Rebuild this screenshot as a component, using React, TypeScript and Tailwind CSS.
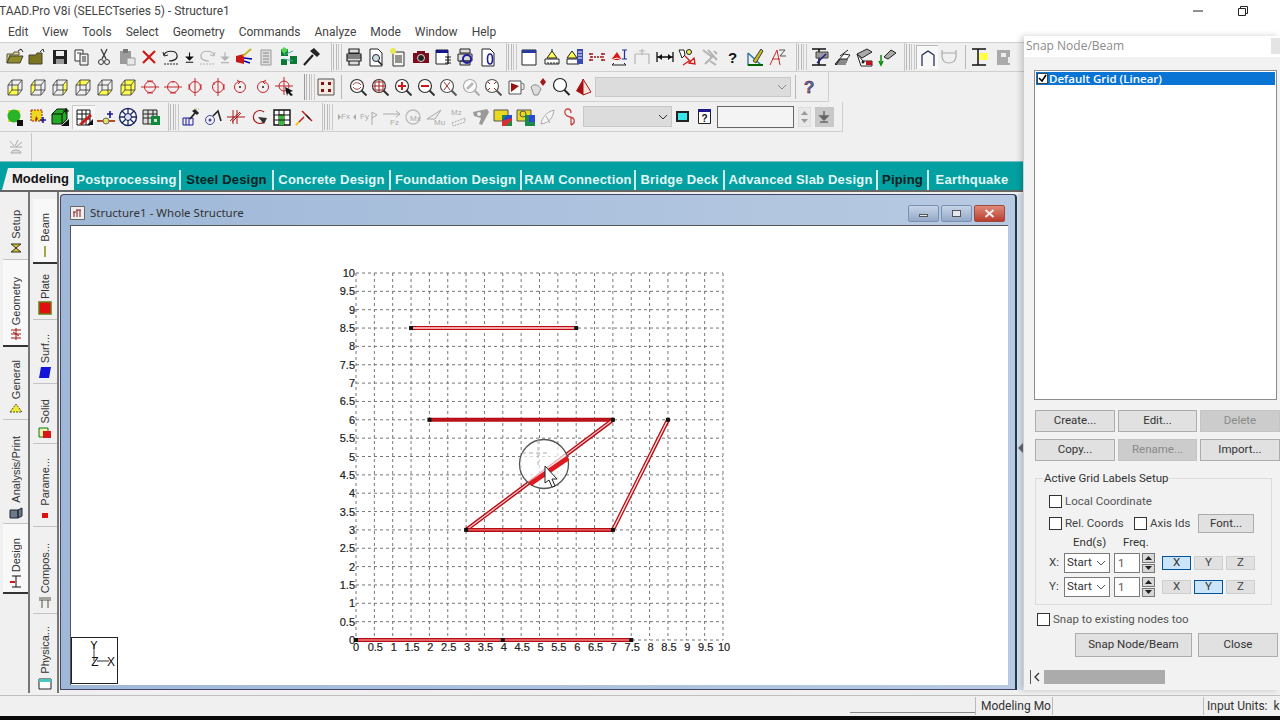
import React from "react";

const S = ({ children, v = 20 }: { children?: React.ReactNode; v?: number }) => (
  <svg width={v} height={v} viewBox="0 0 20 20" fill="none" strokeWidth={1}>{children}</svg>
);
const R = "#c8262c";
const cube = (f: string, g = "") => (
  <S>
    {f && <path d={f} fill="#ffff4d" />}
    {g && <path d={g} fill="#e8e85a" />}
    <path d="M3 8h10v10H3zM7 3h10v10H7zM3 8l4-5M13 8l4-5M13 18l4-5M3 18l4-5" stroke="#444" strokeWidth="0.9" />
  </S>
);
const rot = (c: React.ReactNode) => (
  <S>
    <circle cx="10" cy="10" r="5.5" stroke={R} />
    {c}
  </S>
);
const mag = (c?: React.ReactNode, col = "#333") => (
  <S>
    <circle cx="9" cy="9" r="6.5" stroke={col} strokeWidth="1.2" fill="#fff" />
    <path d="M13.5 13.5l5 5" stroke={col} strokeWidth="2" />
    {c}
  </S>
);
const G = "#b4b4b4";

const row1a: React.ReactNode[] = [
  <S><path d="M2 7h6l1-2h5v3H5L2 16z" fill="#e6d780" stroke="#554" /><path d="M2 16l3-7h13l-3 7z" fill="#8f8a2a" stroke="#443" /><path d="M13 4l3-2 2 3" stroke="#222" /></S>,
  <S><path d="M2 8h7l1-2h5v11H2z" fill="#7c7420" stroke="#443" /><path d="M13 5l3-3 1 3" stroke="#333" /></S>,
  <S><path d="M3 3h14v14H3z" fill="#222" /><path d="M6 4h8v5H6z" fill="#eee" /><path d="M6 12h8v5H6z" fill="#9a9a9a" /></S>,
  <S><path d="M3 3h8v11H3z" fill="#fff" stroke="#333" /><path d="M8 7h8v11H8z" fill="#eee" stroke="#333" /><path d="M10 10h4M10 12h4M10 14h4M5 6h4" stroke="#333" /></S>,
  <S><path d="M7 2l5 10M13 2L8 12" stroke="#333" strokeWidth="1.2" /><circle cx="7" cy="15" r="2.5" stroke="#333" /><circle cx="13" cy="15" r="2.5" stroke="#333" /></S>,
  <S><path d="M3 4h11v13H3z" fill="#9c9c9c" /><path d="M6 2h5v4H6z" fill="#777" /><path d="M10 11h8v7h-8z" fill="#e8e8e8" stroke="#999" /></S>,
  <S><path d="M4 4l12 12M16 4L4 16" stroke="#d01818" strokeWidth="2.2" /></S>,
  <S><path d="M3 8c2-5 12-5 13 0s-5 6-8 6" stroke="#222" strokeWidth="1.2" /><path d="M2 5l1 4 4-1" stroke="#222" /><path d="M3 17h14" stroke="#222" strokeDasharray="2 1" /></S>,
  <S v={16}><path d="M10 4v7M6 10h8l-4 4zM5 17h10" stroke="#111" strokeWidth="1.5" fill="#111" /></S>,
  <S><path d="M17 8c-2-5-12-5-13 0s5 6 8 6" stroke={G} strokeWidth="1.2" /><path d="M18 5l-1 4-4-1" stroke={G} /><path d="M3 17h14" stroke={G} strokeDasharray="2 1" /></S>,
  <S v={16}><path d="M10 4v7M6 10h8l-4 4zM5 17h10" stroke={G} strokeWidth="1.5" fill={G} /></S>,
  <S><path d="M2 9l8-2v10l-8-2z" fill="#c81818" /><path d="M10 11l8 1M10 14l6 2" stroke="#00a" strokeWidth="1.4" /><path d="M9 9l8-7" stroke="#c8b820" strokeWidth="2" /></S>,
  <S><path d="M5 3h10v15H5z" fill="#ddd" stroke="#999" /><path d="M7 6h6M7 9h6M7 12h6M7 15h6" stroke="#888" /></S>,
  <S><path d="M2 2h7v7H2zM11 9h7v8h-7zM2 12h6v6H2z" fill="#0d7a34" /><path d="M5 0l4 3-4 4-3-4z" fill="#52d652" /><path d="M5 8l9-4M5 12l9 2" stroke="#4aa" /></S>,
  <S><path d="M3 18L12 8" stroke="#222" strokeWidth="2.2" /><path d="M9 4l4-3 6 6-3 3z" fill="#222" /></S>,
];
const row1aW = [22.3, 22.3, 22.3, 22.3, 22.3, 22.3, 22.3, 22, 15, 20, 16, 22, 22.5, 22.5, 22.5];
const row1b: React.ReactNode[] = [
  <S><path d="M5 2h10v4H5zM3 7h14v7H3zM5 14h10v4H5z" fill="#ddd" stroke="#222" strokeWidth="1.2" /><path d="M3 9h14M3 11h14" stroke="#222" /></S>,
  <S><path d="M4 2h8l4 4v13H4z" fill="#fff" stroke="#222" /><circle cx="10" cy="11" r="3.5" stroke="#224" fill="#cdd" /><path d="M12 14l4 4" stroke="#222" strokeWidth="1.6" /></S>,
  <S><path d="M5 5h11v14H5z" fill="#f4f4f0" stroke="#333" /><path d="M7 9h7M7 11h7M7 13h7M7 15h7" stroke="#333" /><circle cx="5" cy="4" r="3" fill="#e8e850" /></S>,
  <S><path d="M2 6h16v10H2z" fill="#7a0c1c" /><path d="M6 4h8v3H6z" fill="#7a0c1c" /><circle cx="10" cy="11" r="3.5" fill="#222" stroke="#ddd" /></S>,
  <S><path d="M3 3h12v14H3z" fill="#fff" stroke="#222" /><path d="M3 3h12v3H3z" fill="#14148c" /><path d="M12 10h6M12 13h6M12 16h6M15 9v8" stroke="#222" /></S>,
  <S><path d="M5 2h10v4H5zM3 7h14v7H3zM5 14h10v4H5z" fill="#ddd" stroke="#222" /><circle cx="12" cy="12" r="4" stroke="#1f1fa0" strokeWidth="2" /></S>,
  <S><path d="M4 2h8l4 4v13H4z" fill="#fff" stroke="#222" /><ellipse cx="12" cy="12" rx="2.5" ry="5" stroke="#1f1fa0" strokeWidth="1.6" /></S>,
];
const row1c: React.ReactNode[] = [
  <S><path d="M3 3h14v15H3z" fill="#fff" stroke="#222" /><path d="M3 3h14v3H3z" fill="#2a3a9a" /></S>,
  <S><path d="M10 2v3" stroke="#222" /><path d="M10 4l5 7H5z" fill="#ffff4d" stroke="#222" /><path d="M3 12h14v5H3z" fill="#fff" stroke="#222" /><path d="M6 15v2M9 15v2M12 15v2M15 15v2" stroke="#222" /></S>,
  <S><path d="M8 4l5 7H3z" fill="#ffff4d" stroke="#222" /><path d="M3 12h12v5H3z" fill="#fff" stroke="#222" /><path d="M13 2h6v15h-6z" fill="#3a4ab0" /><path d="M14 5h4M14 8h4M14 11h4" stroke="#fff" /></S>,
  <S><path d="M4 10h12M4 6v8M16 6v8M2 7h4M14 7h4M2 13h4M14 13h4" stroke="#a01818" strokeDasharray="2 1" strokeWidth="1.4" /></S>,
  <S><path d="M2 13l6-8 5 8z" fill="#d81818" /><path d="M2 13l6-2 5 2M3 15h9" stroke="#fff" /><path d="M13 3h5M15.5 3v9M13 12h5" stroke="#1f2fa0" strokeWidth="1.2" /><path d="M3 18h14M3 18l2-2M17 18l-2-2" stroke="#222" /></S>,
  <S><path d="M3 7h14M3 7v10M17 7v10M10 2v6M7 4h6" stroke={G} strokeWidth="1.2" /></S>,
  <S><path d="M2 5v10M18 5v10M2 10h16" stroke="#111" strokeWidth="1.3" /><path d="M3 10l4-3v6zM17 10l-4-3v6z" fill="#111" /></S>,
  <S><path d="M2 3h5l1 5-3 3z" fill="#fff" stroke="#222" /><circle cx="12" cy="5" r="2.5" stroke="#222" fill="#ee5" /><path d="M8 9l6 6M12 16l5-5 1 6zM6 18l6-4" stroke="#d01818" strokeWidth="1.3" /></S>,
  <S><path d="M3 3l9 7-7 7M8 3l9 10M14 4l3 3M10 14l6 4" stroke={G} strokeWidth="2" /></S>,
  <S><text x="6" y="16" fontSize="15" fontWeight="700" fill="#111" fontFamily="Liberation Sans">?</text></S>,
  <S><path d="M3 6v12h15" stroke="#1a5a8a" strokeWidth="1.2" /><path d="M3 6l13 12" stroke="#2a7a9a" strokeWidth="1.6" /><path d="M8 14l8-12 2 2-7 12z" fill="#c8b820" stroke="#444" /><path d="M3 18h15" stroke="#060" strokeWidth="2" /></S>,
  <S><path d="M3 18L10 3l3 15M5 12h8" stroke="#c82c2c" /><path d="M12 3h6l-5 6h6" stroke="#555" /></S>,
];
const row1d: React.ReactNode[] = [
  <S><path d="M3 2h14M3 18h14M10 2v16" stroke="#111" strokeWidth="1.6" /><path d="M7 5h12v6H7z" fill="#999" stroke="#444" /><path d="M8 16l9-9" stroke="#1a1a8a" strokeWidth="1.4" /></S>,
  <S><path d="M3 17l9-10 6 1-3 4H8l-4 6z" fill="#fff" stroke="#222" /><path d="M6 13h10M5 15h10M4 17h10M8 9l8-6" stroke="#222" /></S>,
  <S><path d="M3 7l10-5 5 3-10 6z" fill="#aaa" stroke="#222" /><path d="M3 7l4 12h11v-5H9z" fill="#fff" stroke="#222" /><path d="M12 14h6v4h-6z" fill="#b81818" /><circle cx="9" cy="15" r="1.5" fill="#222" /></S>,
  <S><path d="M7 10l7-7 5 3-8 6z" fill="#aaa" stroke="#222" /><path d="M4 8v9" stroke="#0a8a0a" strokeWidth="1.5" /><path d="M2 14l2 4 2-4" stroke="#0a8a0a" strokeWidth="1.5" /></S>,
];
const row1e: React.ReactNode[] = [
  <S><path d="M4 18V7l6-4 6 4v11" stroke="#1a2050" strokeWidth="1.2" /></S>,
  <S><path d="M3 3v7q1 6 7 6t7-6V3M3 6h14" stroke="#aaa" strokeWidth="1.2" /></S>,
];
const row2a: React.ReactNode[] = [
  cube("M3 13l10-5v10H3z"),
  cube("M3 8l4-5v10l-4 5z"),
  cube("M13 8l4-5v10l-4 5z"),
  cube("M3 8h10l4-5H7z"),
  cube("M3 18h10l4-5H7z"),
  cube("M3 8h10v10H3zM13 8l4-5v10l-4 5zM3 8l4-5h10l-4 5z"),
  rot(<path d="M1 10h18M7 4h6M7 16h6" stroke={R} />),
  rot(<path d="M1 10h18M10 5v1M7 16h6" stroke={R} />),
  rot(<path d="M10 1v18M4 7v6M16 7v6" stroke={R} />),
  rot(<path d="M10 1v18M6 5l0 3M16 7v6" stroke={R} />),
  rot(<><path d="M7 3l3 2-2 2" stroke={R} /><circle cx="10" cy="10" r="1" fill="#222" /></>),
  rot(<><path d="M13 3l-3 2 2 2" stroke={R} /><circle cx="10" cy="10" r="1" fill="#222" /></>),
  <S><circle cx="9" cy="9" r="5" stroke={R} /><path d="M0 9h18M9 0v18" stroke={R} /><path d="M10 10l8 4-3 1 3 3-2 1-3-3-1 3z" fill="#111" /></S>,
];
const row2b: React.ReactNode[] = [
  mag(<path d="M5 8c1-3 6-3 8 0M5 10c2 3 6 3 8 0" stroke="#a04040" />),
  mag(<path d="M9 2v14M2 9h14M5 5h8v8H5z" stroke="#a02020" />),
  mag(<path d="M9 5v8M5 9h8" stroke="#d01818" strokeWidth="2" />),
  mag(<path d="M5 9h8" stroke="#d01818" strokeWidth="2" />),
  mag(<path d="M6 5l6 8M12 5l-6 8" stroke="#a03030" />, "#555"),
  mag(<path d="M6 12l6-6" stroke="#bbb" strokeWidth="3" />, "#aaa"),
  mag(<path d="M5 5l2 2M13 5l-2 2M5 13l2-2M13 13l-2-2" stroke="#a02020" />, "#555"),
  <S><path d="M3 4h12v13H3z" fill="#fff" stroke="#555" /><path d="M5 6l8 3-8 6z" fill="#9a1010" /><path d="M15 6l3 1v5l-3 1" stroke="#777" /></S>,
  <S><path d="M2 10c3-4 8-2 10 2l-3 6H5z" fill="#ddd" stroke="#888" /><path d="M14 1l3 4-3 4-3-4z" fill="#a81818" /></S>,
  <S><circle cx="9" cy="8" r="6.5" stroke="#222" strokeWidth="1.2" fill="#fff" /><path d="M13.5 13l5 5" stroke="#222" strokeWidth="2" /></S>,
  <S><path d="M9 2l-7 12 7 4z" fill="#a81010" /><path d="M9 2l8 13-8 3z" fill="#f2e4e0" stroke="#a81010" /></S>,
];
const row3a: React.ReactNode[] = [
  <S><path d="M3 3h12v12H3z" fill="#e8d820" /><circle cx="9" cy="9" r="6.5" fill="#28b428" /><path d="M12 13h6v6h-6z" fill="#111" /></S>,
  <S><path d="M3 3h11v11H3z" fill="#ecd81c" stroke="#a01818" strokeDasharray="2 1" /><path d="M8 9l2 3-3 2z" fill="#a01818" /><path d="M15 10v6M12 13h6" stroke="#1a1a9a" strokeWidth="1.6" /></S>,
  <S><path d="M2 7l5-5h10v10l-5 5H2z" fill="#22a822" stroke="#111" /><path d="M2 7h10v10M12 7l5-5" stroke="#111" /><path d="M11 19l8-7v7z" fill="#111" /><path d="M16 1v6M13 4h6" stroke="#111" /></S>,
  <S><path d="M3 3h13v15H3z" fill="#fff" stroke="#111" /><path d="M3 7h13M3 12h13M8 3v15M12 3v15" stroke="#111" /><path d="M5 17l11-10 2 2L8 18z" fill="#c81818" /><path d="M13 18l6-6v6z" fill="#111" /></S>,
  <S><path d="M1 14h18" stroke="#b84a2c" strokeWidth="2" /><circle cx="10" cy="14" r="3" fill="#e8e060" stroke="#666" /><path d="M14 4v7M11 7h6" stroke="#1a1a8a" strokeWidth="1.6" /></S>,
  <S><circle cx="10" cy="10" r="8.5" stroke="#1a2a6a" strokeWidth="1.4" fill="#fff" /><circle cx="10" cy="10" r="3.5" stroke="#1a2a6a" fill="#dde" /><path d="M10 2v5M10 13v5M2 10h5M13 10h5M4 4l4 4M12 12l4 4M16 4l-4 4M8 12l-4 4" stroke="#1a2a6a" strokeWidth="1.3" /></S>,
  <S><path d="M2 3h14v14H2z" fill="#ddd" stroke="#222" /><path d="M2 7h14M2 11h14M7 3v14M12 3v14" stroke="#222" /><path d="M10 9h9v9h-9z" fill="#0e8a3a" /><path d="M13 12h3v3h-3z" fill="#ddd" /></S>,
];
const row3b: React.ReactNode[] = [
  <S><path d="M2 11h10v7H2zM5 11v7M8 11v7" stroke="#1a1a9a" /><path d="M9 12l5-6" stroke="#222" strokeWidth="1.8" /><path d="M11 4l3-2 4 4-2 2z" fill="#222" /><path d="M13 2l5 0" stroke="#c0b040" strokeDasharray="1 1" /></S>,
  <S><circle cx="6" cy="13" r="4.5" stroke="#44449a" /><circle cx="6" cy="13" r="1.5" fill="#44449a" /><path d="M9 9l5-5 3 10" stroke="#222" strokeWidth="1.6" /></S>,
  <S><path d="M1 10h18M7 3v14M11 3v14" stroke="#a81818" /><path d="M4 14L14 5M6 15l9-9" stroke="#a81818" /></S>,
  <S><path d="M15 5A6.5 6.5 0 1 0 15 15" stroke="#a81818" strokeWidth="1.2" /><path d="M9 10l9 1-3 6z" fill="#333" /></S>,
  <S><path d="M2 3h16v15H2z" fill="#fff" stroke="#111" strokeWidth="1.4" /><path d="M2 8h16M2 13h16M7 3v15M12 3v15" stroke="#111" /><path d="M7 8h5v10H7z" fill="#38b838" /><path d="M7 8h5M7 13h5" stroke="#111" /></S>,
  <S><path d="M2 18l8-8" stroke="#c81818" strokeWidth="1.5" /><path d="M8 4l10 10" stroke="#c81818" strokeWidth="1.4" /><path d="M2 18l3-3" stroke="#e8d820" strokeWidth="2" /><path d="M12 8l4 4" stroke="#222" strokeWidth="1.5" /></S>,
];
const gt = (t: string, x = 3) => <text x={x} y="12" fontSize="8" fill="#aaa" fontFamily="Liberation Sans">{t}</text>;
const row3c: React.ReactNode[] = [
  <S>{gt("Fx", 4)}<path d="M1 7l3 3-3 3zM19 7l-3 3 3 3z" fill="#aaa" /></S>,
  <S>{gt("Fy", 1)}<path d="M13 18V5l5 3-5 3" stroke="#aaa" /></S>,
  <S><path d="M1 7h16M14 4l4 3-4 3" stroke="#aaa" /><text x="8" y="18" fontSize="8" fill="#aaa" fontFamily="Liberation Sans">Fz</text></S>,
  <S><circle cx="9" cy="10" r="7" stroke="#bbb" strokeWidth="1.3" /><text x="6" y="14" fontSize="8" fill="#aaa" fontFamily="Liberation Sans">Mx</text></S>,
  <S><path d="M1 12L15 3 9 12z" fill="#eee" stroke="#aaa" /><text x="8" y="18" fontSize="8" fill="#aaa" fontFamily="Liberation Sans">Mu</text></S>,
  <S><text x="2" y="8" fontSize="8" fill="#aaa" fontFamily="Liberation Sans">Mz</text><path d="M3 16l13-5v4l-12 4z" stroke="#aaa" strokeDasharray="2 1" /></S>,
  <S><path d="M2 5l14-3 2 3-7 13-3-1 2-6-7-2z" fill="#9a9a9a" /><circle cx="8" cy="7" r="2" fill="#eee" /></S>,
  <S><path d="M1 3h14v11H1z" fill="#e8d820" stroke="#555" /><path d="M9 8h10v11H9z" fill="#1a8a4a" /><path d="M9 13l10-5v5l-6 6H9z" fill="#d83030" /><path d="M9 14l5-6h5v3z" fill="#2a4ad0" /></S>,
  <S><path d="M1 3h14v11H1z" fill="#e8d820" stroke="#555" /><circle cx="7" cy="7" r="3" stroke="#555" /><path d="M9 8h10v11H9z" fill="#1a8a4a" /><path d="M13 8h6v7h-6z" fill="#2a4ad0" /></S>,
  <S><path d="M3 17c1-6 5-12 13-14-1 8-5 13-13 14zM8 9l4 7" stroke="#aaa" fill="#f4f4f4" /></S>,
  <S><path d="M7 2c-5 0-4 7 2 8s5 7 1 8M7 2c3 0 3 3 3 4M10 10v8" stroke="#c84848" strokeWidth="1.3" /></S>,
];

const Grip = () => (
  <div className="flex h-[26px] gap-[1px] mx-[1px] shrink-0 self-center">
    <div className="w-[4px] border-x border-[#b8b8b8]" />
    <div className="w-[4px] border-x border-[#c8c8c8]" />
  </div>
);
const Icons = ({ items, w = 22.5, ws }: { items: React.ReactNode[]; w?: number; ws?: number[] }) => (
  <>
    {items.map((n, i) => (
      <div key={i} className="flex items-center justify-center shrink-0" style={{ width: ws ? ws[i] : w }}>{n}</div>
    ))}
  </>
);
const Sep = () => <div className="w-px h-[24px] bg-[#b8b8b8] shrink-0 self-center" />;
const Div = ({ cls = "" }: { cls?: string }) => <div className={`w-px h-[28px] bg-[#c4c4c4] shrink-0 ${cls}`} />;

const tabs: [string, boolean, number][] = [
  ["Postprocessing", false, 107],
  ["Steel Design", true, 93],
  ["Concrete Design", false, 117],
  ["Foundation Design", false, 131],
  ["RAM Connection", false, 114],
  ["Bridge Deck", false, 89],
  ["Advanced Slab Design", false, 153],
  ["Piping", true, 51],
  ["Earthquake", false, 86],
];

const V = ({ t, icon, h, line = true, active = false }: { t: string; icon: React.ReactNode; h: number; line?: boolean; active?: boolean }) => (
  <div
    className={`flex flex-col items-center justify-end shrink-0 pb-[4px] ${active ? "bg-[#f8f8f8] border-b-2 border-[#333] ml-[3px]" : line ? "border-b border-[#c4c4c4] ml-[3px]" : "ml-[3px]"}`}
    style={{ height: h }}
  >
    <span className="[writing-mode:vertical-rl] rotate-180 text-[11px] leading-[14px] text-[#333]">{t}</span>
    <div className="mt-[2px] h-[14px] flex items-center">{icon}</div>
  </div>
);

const mi = (c: React.ReactNode) => <svg width="14" height="14" viewBox="0 0 14 14">{c}</svg>;
const col1: { t: string; h: number; icon: React.ReactNode; active?: boolean; line?: boolean }[] = [
  { t: "Setup", h: 53, icon: mi(<path d="M2 3h10l-5 4 5 4H2l5-4z" fill="#d8c020" stroke="#333" />) },
  { t: "Geometry", h: 87, active: true, icon: mi(<path d="M2 3h10M2 7h10M2 11h10M7 1v12M4 5l6 4" stroke="#a01818" fill="none" />) },
  { t: "General", h: 73, icon: mi(<path d="M1 11l6-8 6 8z" fill="#ecec30" stroke="#554" strokeDasharray="2 1" />) },
  { t: "Analysis/Print", h: 104, icon: mi(<path d="M1 5h8v8H1zM9 5l4-2v8l-4 2z" fill="#6a7a8a" stroke="#223" />) },
  { t: "Design", h: 70, active: true, icon: mi(<><path d="M3 2h9M3 13h9M7 2v11" stroke="#111" fill="none" /><path d="M1 8h5" stroke="#d01818" strokeWidth="2" /></>) },
];
const col2: { t: string; h: number; icon: React.ReactNode; active?: boolean; line?: boolean }[] = [
  { t: "Beam", h: 65, active: true, icon: mi(<path d="M7 2v11" stroke="#8a8a10" strokeWidth="1.5" />) },
  { t: "Plate", h: 56, icon: mi(<path d="M1 1h12v12H1z" fill="#e01010" stroke="#6a7a10" strokeWidth="1.5" />) },
  { t: "Surf...", h: 64, icon: mi(<path d="M3 2h10l-2 11H1z" fill="#1414d8" />) },
  { t: "Solid", h: 60, icon: mi(<><path d="M1 3h9v9H1z" fill="#f0f0b0" stroke="#0a7a0a" /><path d="M5 6h8v7H5z" fill="#d81818" /></>) },
  { t: "Parame...", h: 83, icon: mi(<path d="M4 5h6v5H4z" fill="#e01010" />) },
  { t: "Compos...", h: 87, icon: mi(<path d="M1 3h12M1 5h12M4 5v8M10 5v8" stroke="#554" fill="none" />) },
  { t: "Physica...", h: 80, icon: mi(<><path d="M1 3h12v10H1z" fill="#fff" stroke="#222" /><path d="M1 3h12v3H1z" fill="#48c8c0" /></>), line: false },
];

const X0 = 285, Y0 = 414, U = 36.7;
const px = (v: number) => X0 + v * U;
const py = (v: number) => Y0 - v * U;
const vals = Array.from({ length: 21 }, (_, i) => i * 0.5);
const beams: [number, number, number, number, string, number][] = [
  [1.5, 8.5, 6, 8.5, "#f6a8a8", 2],
  [2, 6, 7, 6, "#b8181e", 1.4],
  [7, 6, 3, 3, "#f8c8c8", 1.3],
  [3, 3, 7, 3, "#f07070", 1.4],
  [7, 3, 8.5, 6, "#fbdcdc", 1.4],
  [0, 0, 7.5, 0, "#f08080", 1.6],
];
const nodes: [number, number][] = [[1.5, 8.5], [6, 8.5], [2, 6], [7, 6], [8.5, 6], [3, 3], [7, 3], [0, 0], [4, 0], [7.5, 0]];

const Chart = () => (
  <svg width="938" height="461" viewBox="0 0 938 461" className="block">
    {vals.map((v) => (
      <g key={v}>
        <line x1={px(v)} x2={px(v)} y1={py(10)} y2={py(0)} stroke="#777" strokeDasharray="3 3" />
        <line x1={px(0)} x2={px(10)} y1={py(v)} y2={py(v)} stroke="#777" strokeDasharray="3 3" />
        <text x={px(0) - 1} y={py(v) + 4} textAnchor="end" fontSize="11" fill="#222" fontFamily="Liberation Sans" stroke="#222" strokeWidth="0.2">{v}</text>
        <text x={px(v) + (v === 0 ? 0 : 1)} y={Y0 + 11} textAnchor="middle" fontSize="11" fill="#222" fontFamily="Liberation Sans" stroke="#222" strokeWidth="0.2">{v}</text>
      </g>
    ))}
    {beams.map(([a, b, c, d, col, w], i) => (
      <g key={i}>
        <line x1={px(a)} y1={py(b)} x2={px(c)} y2={py(d)} stroke="#b80c14" strokeWidth={4} />
        <line x1={px(a)} y1={py(b)} x2={px(c)} y2={py(d)} stroke={col} strokeWidth={w} />
      </g>
    ))}
    {nodes.map(([a, b], i) => (
      <rect key={i} x={px(a) - 2} y={py(b) - 2} width="4" height="4" fill="#111" />
    ))}
    <circle cx="473" cy="238" r="24.5" fill="#ffffff" fillOpacity="0.7" stroke="#555" strokeWidth="1.3" />
    <line x1="459" y1="258" x2="497" y2="232" stroke="#e01820" strokeWidth="5" />
    <path d="M451 227h27M467 214v28" stroke="#aaa" strokeDasharray="4 3" />
    <path d="M474 240v17l4-3 3 7 3-1-3-7h5z" fill="#fff" stroke="#222" />
  </svg>
);

const Btn = ({ t, w, h = 22, off = false, cls = "" }: { t: string; w: number; h?: number; off?: boolean; cls?: string }) => (
  <div
    className={`flex items-center justify-center shrink-0 text-[11.5px] border ${off ? "bg-[#cccccc] text-[#8a8a8a] border-[#c4c4c4]" : "bg-[#e1e1e1] text-[#333] border-[#adadad]"} ${cls}`}
    style={{ width: w, height: h }}
  >
    {t}
  </div>
);
const Check = ({ cls = "" }: { cls?: string }) => <div className={`w-[13px] h-[13px] bg-white border border-[#333] shrink-0 ${cls}`} />;

const AxisRow = ({ l, on }: { l: string; on: string }) => (
  <div className="flex items-center h-[24px]">
    <span className="w-[17px] text-[11.5px] text-[#444] pl-[2px]">{l}</span>
    <div className="w-[46px] h-[20px] bg-white border border-[#7a7a7a] flex items-center justify-between pl-[2px] pr-[3px] text-[11.5px] text-[#333]">
      Start
      <svg width="10" height="6" viewBox="0 0 10 6"><path d="M1 1l4 4 4-4" stroke="#555" fill="none" /></svg>
    </div>
    <div className="ml-[4px] w-[26px] h-[20px] bg-white border border-[#7a7a7a] text-[11.5px] text-[#555] pl-[3px] leading-[18px]">1</div>
    <div className="ml-[2px] w-[13px] h-[20px] flex flex-col gap-[1px]">
      <div className="flex-1 bg-[#d8d8d8] border border-[#777] flex items-center justify-center"><svg width="7" height="4" viewBox="0 0 7 4"><path d="M3.5 0L7 4H0z" fill="#222" /></svg></div>
      <div className="flex-1 bg-[#d8d8d8] border border-[#777] flex items-center justify-center"><svg width="7" height="4" viewBox="0 0 7 4"><path d="M3.5 4L0 0h7z" fill="#222" /></svg></div>
    </div>
    <div className="ml-[7px] flex gap-[3px]">
      {["X", "Y", "Z"].map((a) => (
        <div key={a} className={`w-[29px] h-[14px] flex items-center justify-center text-[11.5px] border ${a === on ? "bg-[#cce4f7] border-[#005499] text-[#333]" : "bg-[#e1e1e1] border-[#cfcfcf] text-[#444]"}`}>{a}</div>
      ))}
    </div>
  </div>
);

const Panel = () => (
  <div className="absolute left-[1024px] top-[36px] w-[256px] h-[654px] bg-[#f2f2f2] flex flex-col shadow-[-3px_0_6px_rgba(0,0,0,0.18)] font-['Roboto',sans-serif]">
    <div className="h-[21px] bg-white flex items-start justify-between shrink-0 font-['Open_Sans',sans-serif]">
      <span className="pl-[2px] text-[12px] leading-[20px] text-[#8c8c8c]">Snap Node/Beam</span>
      <div className="w-[9px] h-[16px] bg-[#e4e4e4] mt-[2px]" />
    </div>
    <div className="ml-[10px] mt-[13px] w-[243px] h-[330px] bg-white border border-[#8c8c8c] p-[1px] shrink-0 font-['Open_Sans',sans-serif]">
      <div className="h-[13px] bg-[#0a74d4] flex items-center pl-[1px]">
        <div className="w-[11px] h-[11px] bg-white border border-[#444] flex items-center justify-center">
          <svg width="9" height="9" viewBox="0 0 9 9"><path d="M1 4l3 3 4-6" stroke="#000" strokeWidth="1.6" fill="none" /></svg>
        </div>
        <span className="ml-[1px] text-[11.5px] font-semibold text-white">Default Grid (Linear)</span>
      </div>
    </div>
    <div className="ml-[11px] mt-[10px] flex gap-[3px]">
      <Btn t="Create..." w={80} />
      <Btn t="Edit..." w={79} />
      <Btn t="Delete" w={80} off />
    </div>
    <div className="ml-[11px] mt-[7px] flex gap-[3px]">
      <Btn t="Copy..." w={80} />
      <Btn t="Rename..." w={79} off />
      <Btn t="Import..." w={80} />
    </div>
    <div className="relative ml-[11px] mt-[17px] w-[237px] h-[127px] border border-[#dcdcdc] pl-[13px] pt-[16px] shrink-0">
      <span className="absolute left-[7px] top-[-8px] bg-[#f2f2f2] px-[1px] text-[11.5px] leading-[14px] text-[#333]">Active Grid Labels Setup</span>
      <div className="flex items-center h-[13px] text-[11.5px] text-[#555]"><Check /><span className="ml-[3px]">Local Coordinate</span></div>
      <div className="flex items-center h-[19px] mt-[6px] text-[11.5px] text-[#444]">
        <Check /><span className="ml-[3px] w-[69px]">Rel. Coords</span><Check /><span className="ml-[3px] w-[48px]">Axis Ids</span>
        <Btn t="Font..." w={56} h={19} />
      </div>
      <div className="flex h-[15px] mt-[1px] text-[11.5px] text-[#333]"><span className="ml-[24px] w-[50px]">End(s)</span><span>Freq.</span></div>
      <div className="-ml-[2px] mt-[2px]"><AxisRow l="X:" on="X" /><AxisRow l="Y:" on="Y" /></div>
    </div>
    <div className="ml-[13px] mt-[8px] flex items-center h-[13px] text-[11.5px] text-[#555]"><Check /><span className="ml-[3px]">Snap to existing nodes too</span></div>
    <div className="ml-[51px] mt-[7px] flex gap-[6px]">
      <Btn t="Snap Node/Beam" w={117} h={24} />
      <Btn t="Close" w={80} h={24} />
    </div>
    <div className="ml-[6px] mt-[13px] h-[14px] flex items-center border-l border-[#555]">
      <svg width="12" height="10" viewBox="0 0 12 10" className="ml-[1px]"><path d="M7 1L3 5l4 4" stroke="#333" strokeWidth="1.3" fill="none" /></svg>
      <div className="w-[121px] h-[14px] bg-[#ababab]" />
    </div>
  </div>
);

export default function App() {
  return (
    <div className="relative w-[1280px] h-[720px] overflow-hidden bg-[#f0f0f0] font-['Roboto',sans-serif] flex flex-col">
      <div className="h-[22px] bg-white flex items-center justify-between shrink-0">
        <span className="-ml-[1px] text-[12px] text-[#444]">TAAD.Pro V8i (SELECTseries 5) - Structure1</span>
        <div className="flex items-center gap-[33px] pr-[31px]">
          <svg width="12" height="12" viewBox="0 0 12 12"><path d="M1 6h10" stroke="#222" /></svg>
          <svg width="12" height="12" viewBox="0 0 12 12"><path d="M1.5 3.5h7v7h-7zM3.5 3.5v-2h7v7h-2" stroke="#222" fill="none" /></svg>
        </div>
      </div>
      <div className="h-[20px] bg-white flex items-center pl-[8px] gap-[14px] text-[12px] text-[#444] shrink-0">
        {["Edit", "View", "Tools", "Select", "Geometry", "Commands", "Analyze", "Mode", "Window", "Help"].map((m) => <span key={m}>{m}</span>)}
      </div>

      <div className="h-[30px] flex items-center border-y border-[#cfcfcf] pl-[4px] shrink-0 w-[1024px]">
        <Icons items={row1a} ws={row1aW} />
        <Div cls="ml-[8px]" /><Grip />
        <Icons items={row1b} w={22.3} />
        <Div cls="ml-[7px]" /><Grip />
        <Icons items={row1c} w={22.6} />
        <Div cls="ml-[7px]" /><Grip />
        <Icons items={row1d} w={22.6} />
        <Div cls="ml-[6px]" /><Grip />
        <div className="w-[22px] h-[24px] flex items-center justify-center bg-[#f8f8f8] border-l border-t border-[#bbb] shrink-0">{row1e[0]}</div>
        <Icons items={[row1e[1]]} w={22} />
        <div className="w-[5px]" /><Sep />
        <Icons items={[
          <S><path d="M3 2h14M3 18h14M9 2v16" stroke="#111" strokeWidth="1.5" /><path d="M10 6h9v7h-9z" fill="#ffff4d" /></S>,
          <S><path d="M4 3h13v15H4z" fill="#aaa" /><path d="M8 6h5v4H8zM15 10l3 0v6h-3z" fill="#eee" /></S>,
        ]} ws={[26, 22]} />
      </div>

      <div className="h-[30px] flex items-center shrink-0 pl-[4px] w-[829px] border-b border-r border-[#cfcfcf]">
        <Icons items={row2a} />
        <div className="w-px h-[26px] bg-[#999] ml-[7px] shrink-0" /><Grip />
        <div className="w-[21px] flex justify-center shrink-0"><S><path d="M2 2h16v16H2z" fill="#f4e8e0" stroke="#555" /><path d="M5 5h3v3H5zM12 5h3v3h-3zM5 12h3v3H5zM12 12h3v3h-3z" fill="#7a1818" /></S></div>
        <div className="w-[4px] shrink-0" /><Sep /><div className="w-[5px] shrink-0" />
        <Icons items={row2b} w={22.6} />
        <div className="w-[196px] h-[20px] bg-[#dcdcdc] border border-[#c8c8c8] flex items-center justify-end pr-[3px] shrink-0">
          <svg width="10" height="6" viewBox="0 0 10 6"><path d="M1 1l4 4 4-4" stroke="#888" fill="none" /></svg>
        </div>
        <div className="w-[4px] shrink-0" /><Sep />
        <div className="w-[28px] flex justify-center shrink-0">
          <svg width="14" height="18" viewBox="0 0 14 18"><text x="1" y="15" fontSize="17" fontWeight="700" fill="#3a7ab8" stroke="#700" strokeWidth="0.5" fontFamily="Liberation Sans">?</text></svg>
        </div>
      </div>

      <div className="h-[30px] flex items-center shrink-0 pl-[4px] w-[843px] border-b border-r border-[#cfcfcf]">
        <Icons items={row3a.slice(0, 3)} />
        <div className="w-[23px] h-[24px] flex items-center justify-center bg-[#f8f8f8] border-l border-t border-[#ccc] shrink-0">{row3a[3]}</div>
        <Icons items={row3a.slice(4)} />
        <Div cls="ml-[6px]" /><Grip />
        <Icons items={row3b} w={22.6} />
        <Div cls="ml-[6px]" /><Grip />
        <div className="w-[2px] shrink-0" />
        <Icons items={row3c} w={22.4} />
        <div className="w-[89px] h-[21px] ml-[1px] bg-[#dcdcdc] border border-[#c8c8c8] flex items-center justify-end pr-[3px] shrink-0">
          <svg width="10" height="6" viewBox="0 0 10 6"><path d="M1 1l4 4 4-4" stroke="#333" fill="none" /></svg>
        </div>
        <div className="w-[21px] flex justify-center shrink-0"><svg width="15" height="13" viewBox="0 0 15 13"><path d="M1 1h13v11H1z" fill="#222" /><path d="M3 3h9v7H3z" fill="#38e8e8" /></svg></div>
        <div className="w-[24px] flex justify-center shrink-0"><svg width="13" height="15" viewBox="0 0 13 15"><path d="M.5 .5h12v14H.5z" fill="#fff" stroke="#222" /><path d="M0 0h13v3H0z" fill="#1a1a8a" /><text x="3.5" y="12.5" fontSize="10" fontWeight="700" fill="#111" fontFamily="Liberation Sans">?</text></svg></div>
        <div className="w-[77px] h-[22px] bg-[#f4f4f4] border border-[#666] shrink-0" />
        <div className="ml-[4px] w-[13px] h-[20px] flex flex-col items-center justify-center gap-[4px] bg-[#e8e8e8] border border-[#ddd] shrink-0">
          <svg width="7" height="4" viewBox="0 0 7 4"><path d="M3.5 0L7 4H0z" fill="#999" /></svg>
          <svg width="7" height="4" viewBox="0 0 7 4"><path d="M3.5 4L0 0h7z" fill="#999" /></svg>
        </div>
        <div className="ml-[4px] w-[19px] h-[20px] bg-[#c8c8c8] flex items-center justify-center shrink-0">
          <svg width="12" height="13" viewBox="0 0 12 13"><path d="M6 1v6M2 6h8L6 10zM2 12h8" stroke="#666" fill="#666" strokeWidth="1.4" /></svg>
        </div>
      </div>

      <div className="h-[29px] flex items-center shrink-0 w-[1024px]">
        <div className="w-[32px] flex justify-center border-r border-[#c8c8c8] h-[28px] items-center">
          <svg width="18" height="18" viewBox="0 0 18 18"><path d="M3 3l4 5M11 2l-3 6M15 4l-6 5M3 9h12M4 15c0-4 10-4 10 0z" stroke="#aaa" fill="#ddd" /></svg>
        </div>
      </div>

      <div className="h-[29px] shrink-0 w-[1023px] bg-[#02a0a0] border-t border-[#7fbcbc] flex items-end font-['Liberation_Sans',sans-serif]">
        <div className="h-[22px] w-[72px] ml-[2px] bg-[#f0f0f0] [clip-path:polygon(6px_0,100%_0,100%_100%,0_100%)] flex items-center justify-end pr-[5px] text-[13px] font-bold text-[#111] shrink-0">Modeling</div>
        <div className="flex items-end">
          {tabs.map(([t, dark, w], i) => (
            <div key={t} className={`h-[20px] flex items-center justify-center text-[13px] font-bold tracking-[0.2px] shrink-0 ${i < tabs.length - 1 ? "border-r-2 border-[#cfe8e8]" : ""} ${dark ? "text-[#062222]" : "text-[#e4f6f6]"}`} style={{ width: w }}>{t}</div>
          ))}
        </div>
      </div>

      <div className="flex-1 flex min-h-0 border-t-2 border-[#666] w-[1023px] font-['Liberation_Sans',sans-serif]">
        <div className="w-[30px] shrink-0 border-r-2 border-[#777] h-[501px] flex flex-col pt-[15px]">
          {col1.map((c) => <V key={c.t} {...c} />)}
        </div>
        <div className="w-[29px] shrink-0 border-r-2 border-[#777] h-[501px] flex flex-col pt-[7px]">
          {col2.map((c) => <V key={c.t} {...c} />)}
        </div>
        <div className="ml-[1px] mt-[2px] w-[957px] h-[496px] rounded-t-[4px] border border-[#446] border-r-2 border-r-[#223a44] flex flex-col shrink-0 pl-[9px] pb-[4px] bg-gradient-to-r from-[#9fb8d8] to-[#b8cae2]">
          <div className="h-[30px] pt-[6px] flex items-center shrink-0 font-['Noto_Sans',sans-serif]">
            <svg width="15" height="14" viewBox="0 0 15 14"><path d="M.5 .5h14v13H.5z" fill="#eee" stroke="#666" /><path d="M4 11V6M7 11V4M10 11V4M3 6h3M6 4h5" stroke="#8a1818" /></svg>
            <span className="ml-[5px] text-[11.5px] text-[#333]">Structure1 - Whole Structure</span>
            <div className="ml-auto flex gap-[2px] mr-[10px]">
              <div className="w-[31px] h-[17px] rounded-[2px] border border-[#7a90b0] bg-gradient-to-b from-[#c6d4e8] to-[#94a9c8] flex items-center justify-center"><div className="w-[9px] h-[3px] bg-[#e4e8f0] border border-[#555] mt-[5px]" /></div>
              <div className="w-[31px] h-[17px] rounded-[2px] border border-[#7a90b0] bg-gradient-to-b from-[#c6d4e8] to-[#94a9c8] flex items-center justify-center"><div className="w-[9px] h-[7px] bg-[#e4e8f0] border border-[#555]" /></div>
              <div className="w-[31px] h-[17px] rounded-[2px] border border-[#a04a3a] bg-gradient-to-b from-[#e08878] to-[#b83c30] flex items-center justify-center">
                <svg width="11" height="9" viewBox="0 0 11 9"><path d="M1.5 1l8 7M9.5 1l-8 7" stroke="#eee" strokeWidth="2" /></svg>
              </div>
            </div>
          </div>
          <div className="relative w-[938px] flex-1 bg-white border-t border-l border-[#555] overflow-hidden">
            <Chart />
            <div className="absolute left-0 bottom-[1px] w-[47px] h-[47px] bg-white border border-[#222]">
              <svg width="45" height="45" viewBox="0 0 45 45">
                <path d="M22 6v17M25 23h12" stroke="#777" strokeWidth="1.4" />
                <text x="22" y="11" textAnchor="middle" fontSize="11" fill="#111" fontFamily="Liberation Sans">Y</text>
                <text x="23" y="28" textAnchor="middle" fontSize="12" fill="#111" fontFamily="Liberation Sans">Z</text>
                <text x="39" y="28" textAnchor="middle" fontSize="12" fill="#111" fontFamily="Liberation Sans">X</text>
              </svg>
            </div>
          </div>
        </div>
        <div className="relative w-[6px] h-[496px] mt-[2px] bg-[#d6e2ee] shrink-0">
          <svg width="5" height="10" viewBox="0 0 5 10" className="absolute right-0 top-[249px]"><path d="M5 0v10L0 5z" fill="#667" /></svg>
        </div>
      </div>

      <div className="h-[21px] shrink-0 border-t border-[#bfbfbf] bg-[#f0f0f0] flex items-center text-[12px] text-[#333]">
        <div className="ml-auto flex h-full items-center">
          <div className="w-[125px] border-t border-[#888] h-px self-end mb-[3px]" />
          <span className="w-[77px] pl-[5px] border-l border-[#bbb] whitespace-nowrap">Modeling Mo</span>
          <div className="w-[1px] h-[18px] bg-[#bbb]" />
          <div className="w-[150px]" />
          <div className="w-[1px] h-[18px] bg-[#bbb]" />
          <span className="w-[76px] pl-[3px] whitespace-pre">Input Units:  k</span>
        </div>
      </div>
      <div className="h-[4px] bg-[#0a0a0a] shrink-0" />
      <Panel />
    </div>
  );
}
